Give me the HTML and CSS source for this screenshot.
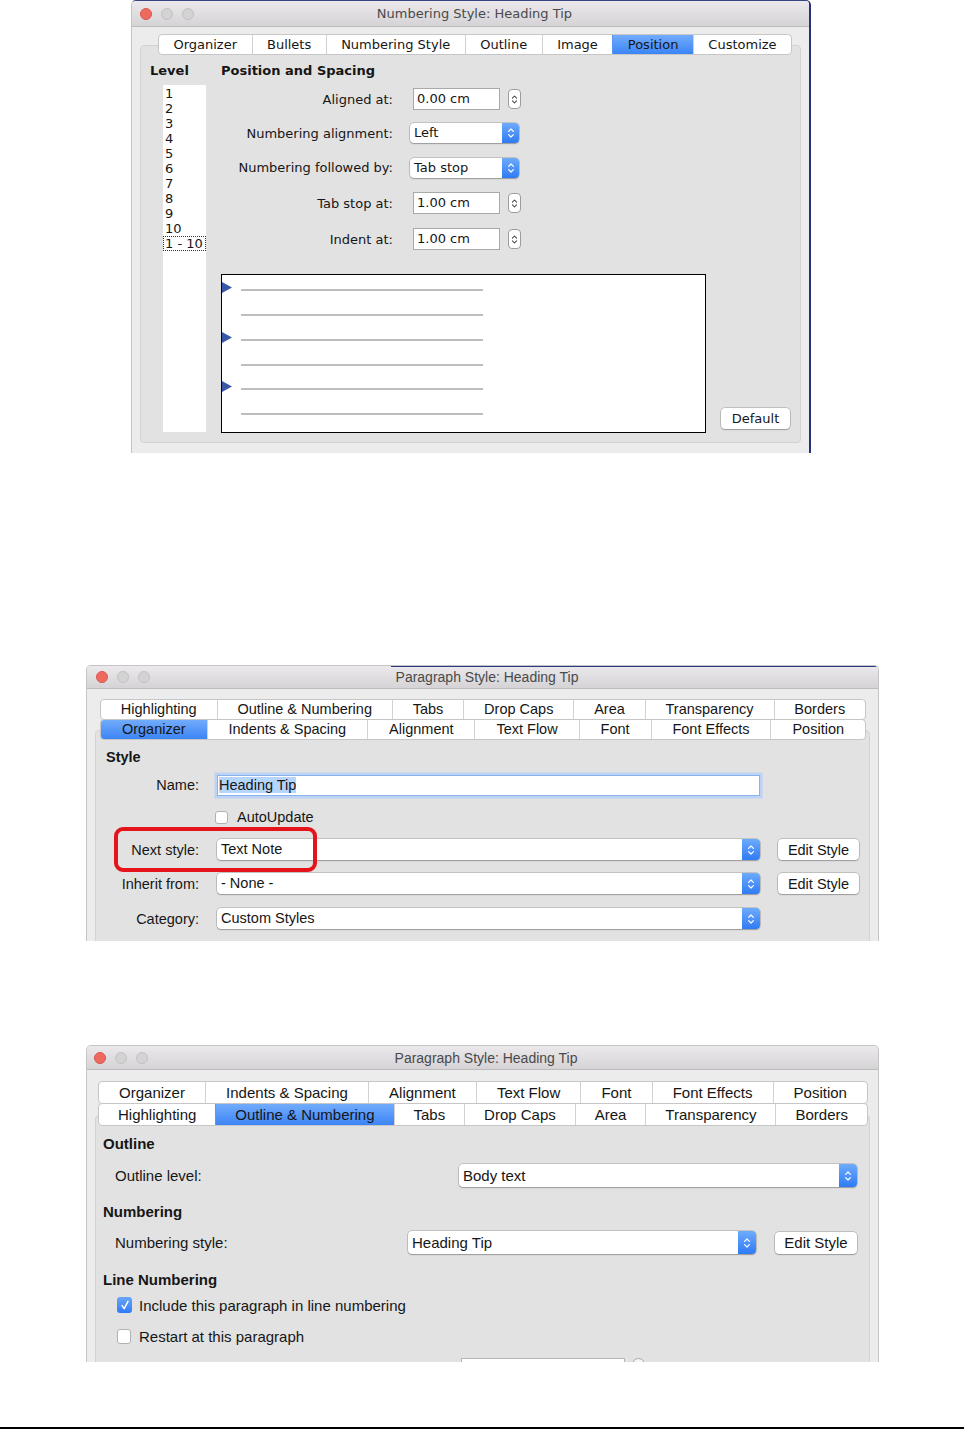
FILE: index.html
```html
<!DOCTYPE html>
<html lang="en">
<head>
    <meta charset="UTF-8">
    <meta name="viewport" content="width=device-width, initial-scale=1.0">
    <title>Numbering and Paragraph Style dialogs</title>
    <link rel="stylesheet" href="styles.css">
</head>
<body>
    <svg class="defs" width="0" height="0" aria-hidden="true">
        <symbol id="updown" viewBox="0 0 8 14"><path d="M1.6 5.4 4 3 6.4 5.4M1.6 8.6 4 11 6.4 8.6" fill="none" stroke="currentColor" stroke-width="1.2" stroke-linecap="round" stroke-linejoin="round"/></symbol>
        <symbol id="tick" viewBox="0 0 14 14"><path d="M4 7.6 6.2 10.6 10 3.4" fill="none" stroke="#fff" stroke-width="1.5" stroke-linecap="round" stroke-linejoin="round"/></symbol>
    </svg>

    <!-- Numbering Style dialog -->
    <div class="window numbering">
        <div class="titlebar">
            <div class="lights"><span class="light close"></span><span class="light"></span><span class="light"></span></div>
            <div class="title">Numbering Style: Heading Tip</div>
        </div>
        <div class="panel">
            <div class="tabrow np-tabs">
                <span class="tab">Organizer</span>
                <span class="tab">Bullets</span>
                <span class="tab">Numbering Style</span>
                <span class="tab">Outline</span>
                <span class="tab">Image</span>
                <span class="tab active">Position</span>
                <span class="tab">Customize</span>
            </div>
            <div class="np-body">
                <div class="levels">
                    <h2 class="heading">Level</h2>
                    <ul class="level-list">
                        <li>1</li>
                        <li>2</li>
                        <li>3</li>
                        <li>4</li>
                        <li>5</li>
                        <li>6</li>
                        <li>7</li>
                        <li>8</li>
                        <li>9</li>
                        <li>10</li>
                        <li class="selected">1 - 10</li>
                    </ul>
                </div>
                <div class="np-main">
                    <h2 class="heading">Position and Spacing</h2>
                    <div class="np-form">
                        <label>Aligned at:</label>
                        <div class="spin"><span class="spin-field">0.00 cm</span><span class="spin-btn"><svg><use href="#updown"/></svg></span></div>
                        <label>Numbering alignment:</label>
                        <div class="select small"><span class="select-value">Left</span><span class="select-arrow"><svg><use href="#updown"/></svg></span></div>
                        <label>Numbering followed by:</label>
                        <div class="select small"><span class="select-value">Tab stop</span><span class="select-arrow"><svg><use href="#updown"/></svg></span></div>
                        <label>Tab stop at:</label>
                        <div class="spin"><span class="spin-field">1.00 cm</span><span class="spin-btn"><svg><use href="#updown"/></svg></span></div>
                        <label>Indent at:</label>
                        <div class="spin"><span class="spin-field">1.00 cm</span><span class="spin-btn"><svg><use href="#updown"/></svg></span></div>
                    </div>
                    <div class="preview-row">
                        <div class="preview">
                            <svg width="483" height="157" viewBox="0 0 483 157">
                                <g stroke="#bdbdbd" stroke-width="2">
                                    <line x1="19" y1="15" x2="261" y2="15"/>
                                    <line x1="19" y1="40" x2="261" y2="40"/>
                                    <line x1="19" y1="65" x2="261" y2="65"/>
                                    <line x1="19" y1="90" x2="261" y2="90"/>
                                    <line x1="19" y1="114" x2="261" y2="114"/>
                                    <line x1="19" y1="139" x2="261" y2="139"/>
                                </g>
                                <g fill="#3a58a8">
                                    <path d="M0 7 10 12.5 0 18Z"/>
                                    <path d="M0 57 10 62.5 0 68Z"/>
                                    <path d="M0 106 10 111.5 0 117Z"/>
                                </g>
                            </svg>
                        </div>
                        <button class="button">Default</button>
                    </div>
                </div>
            </div>
        </div>
    </div>

    <!-- Paragraph Style dialog, Organizer tab -->
    <div class="window para para-organizer">
        <div class="titlebar">
            <div class="lights"><span class="light close"></span><span class="light"></span><span class="light"></span></div>
            <div class="title">Paragraph Style: Heading Tip</div>
        </div>
        <div class="panel">
            <div class="para-tabs">
                <div class="tabrow">
                    <span class="tab">Highlighting</span>
                    <span class="tab">Outline &amp; Numbering</span>
                    <span class="tab">Tabs</span>
                    <span class="tab">Drop Caps</span>
                    <span class="tab">Area</span>
                    <span class="tab">Transparency</span>
                    <span class="tab">Borders</span>
                </div>
                <div class="tabrow">
                    <span class="tab active">Organizer</span>
                    <span class="tab">Indents &amp; Spacing</span>
                    <span class="tab">Alignment</span>
                    <span class="tab">Text Flow</span>
                    <span class="tab">Font</span>
                    <span class="tab">Font Effects</span>
                    <span class="tab">Position</span>
                </div>
            </div>
            <h2 class="heading">Style</h2>
            <div class="org-form">
                <label class="lbl">Name:</label>
                <div class="field"><span class="sel">Heading Tip</span></div>

                <span class="lbl"></span>
                <div class="check-line"><span class="check"></span>AutoUpdate</div>

                <label class="lbl">Next style:</label>
                <div class="select"><span class="select-value">Text Note</span><span class="select-arrow"><svg><use href="#updown"/></svg></span></div>
                <button class="button">Edit Style</button>

                <label class="lbl">Inherit from:</label>
                <div class="select"><span class="select-value">- None -</span><span class="select-arrow"><svg><use href="#updown"/></svg></span></div>
                <button class="button">Edit Style</button>

                <label class="lbl">Category:</label>
                <div class="select"><span class="select-value">Custom Styles</span><span class="select-arrow"><svg><use href="#updown"/></svg></span></div>

                <div class="callout"></div>
            </div>
        </div>
    </div>

    <!-- Paragraph Style dialog, Outline & Numbering tab -->
    <div class="window para para-outline">
        <div class="titlebar">
            <div class="lights"><span class="light close"></span><span class="light"></span><span class="light"></span></div>
            <div class="title">Paragraph Style: Heading Tip</div>
        </div>
        <div class="panel">
            <div class="para-tabs">
                <div class="tabrow">
                    <span class="tab">Organizer</span>
                    <span class="tab">Indents &amp; Spacing</span>
                    <span class="tab">Alignment</span>
                    <span class="tab">Text Flow</span>
                    <span class="tab">Font</span>
                    <span class="tab">Font Effects</span>
                    <span class="tab">Position</span>
                </div>
                <div class="tabrow">
                    <span class="tab">Highlighting</span>
                    <span class="tab active">Outline &amp; Numbering</span>
                    <span class="tab">Tabs</span>
                    <span class="tab">Drop Caps</span>
                    <span class="tab">Area</span>
                    <span class="tab">Transparency</span>
                    <span class="tab">Borders</span>
                </div>
            </div>

            <h2 class="heading">Outline</h2>
            <div class="row row-outline">
                <label>Outline level:</label>
                <div class="select tall outline-select"><span class="select-value">Body text</span><span class="select-arrow"><svg><use href="#updown"/></svg></span></div>
            </div>

            <h2 class="heading heading-numbering">Numbering</h2>
            <div class="row row-numbering">
                <label>Numbering style:</label>
                <div class="select tall numbering-select"><span class="select-value">Heading Tip</span><span class="select-arrow"><svg><use href="#updown"/></svg></span></div>
                <button class="button">Edit Style</button>
            </div>

            <h2 class="heading heading-lines">Line Numbering</h2>
            <div class="check-row first"><span class="check checked"><svg><use href="#tick"/></svg></span>Include this paragraph in line numbering</div>
            <div class="check-row"><span class="check"></span>Restart at this paragraph</div>
            <div class="cut-row"><span class="cut-field"></span><span class="cut-spin"></span></div>
        </div>
    </div>

    <div class="rule"></div>
</body>
</html>
```

FILE: styles.css
```css
* {
    margin: 0;
    padding: 0;
    box-sizing: border-box;
}

body {
    width: 964px;
    height: 1429px;
    overflow: hidden;
    background: #fff;
    color: #161616;
    font-family: "Liberation Sans", Arial, sans-serif;
    font-size: 14.5px;
}

.defs {
    position: absolute;
    width: 0;
    height: 0;
}

/* window chrome */

.window {
    position: relative;
    background: #ececec;
    border: 1px solid #c4c4c4;
    border-bottom: 0;
    border-radius: 5px 5px 0 0;
    overflow: hidden;
}

.titlebar {
    display: grid;
    grid-template-columns: 1fr auto 1fr;
    align-items: center;
    height: 24px;
    padding-left: 8px;
    background: linear-gradient(#ebe9eb, #d5d3d5);
    border-bottom: 1px solid #bcbcbc;
}

.lights {
    display: flex;
    gap: 9px;
}

.light {
    width: 12px;
    height: 12px;
    border-radius: 50%;
    background: #d3d3d3;
    border: 1px solid #c2c2c2;
}

.light.close {
    background: #ee695e;
    border-color: #d8574c;
}

.title {
    color: #4a4a4a;
    font-size: 14px;
    white-space: nowrap;
}

.panel {
    background: #e2e2e2;
    border: 1px solid #d3d3d3;
    border-radius: 4px;
}

.heading {
    font-size: inherit;
    font-weight: bold;
    line-height: 16px;
}

/* tabs */

.tabrow {
    display: flex;
    height: 21px;
    background: #fff;
    border: 1px solid #c6c6c6;
    border-radius: 4px;
    overflow: hidden;
}

.tab {
    flex: 1 1 auto;
    text-align: center;
    line-height: 19px;
    white-space: nowrap;
    border-left: 1px solid #d2d2d2;
}

.tab:first-child {
    border-left: 0;
}

.tab.active {
    background: linear-gradient(#72abfb, #3c85f6);
    border-left-color: #5b97f4;
}

/* controls */

.select {
    display: flex;
    height: 21px;
    background: #fff;
    border-radius: 4px;
    box-shadow: 0 0 0 0.5px rgba(0, 0, 0, 0.28), 0 1px 1.5px rgba(0, 0, 0, 0.22);
    overflow: hidden;
}

.select-value {
    flex: 1;
    padding-left: 4px;
    line-height: 21px;
    white-space: nowrap;
}

.select-arrow {
    width: 18px;
    display: flex;
    align-items: center;
    justify-content: center;
    color: #fff;
    background: linear-gradient(#6eabfc, #2f7bf4);
}

.select-arrow svg {
    width: 8px;
    height: 14px;
}

.button {
    height: 21px;
    font: inherit;
    color: inherit;
    background: #fff;
    border: 0;
    border-radius: 4px;
    box-shadow: 0 0 0 0.5px rgba(0, 0, 0, 0.3), 0 1px 1.5px rgba(0, 0, 0, 0.2);
}

.check {
    display: inline-flex;
    align-items: center;
    justify-content: center;
    width: 13px;
    height: 13px;
    background: #fff;
    border: 1px solid #b2b2b2;
    border-radius: 3px;
}

.check.checked {
    width: 15px;
    height: 16px;
    border: 0;
    background: linear-gradient(#6aa6fb, #2f7bf4);
}

.check.checked svg {
    width: 14px;
    height: 14px;
}

/* numbering style dialog */

.numbering {
    width: 680px;
    height: 453px;
    margin-left: 131px;
    font-family: "DejaVu Sans", sans-serif;
    font-size: 13px;
    border-top: 1px solid #3a4481;
    border-right: 2px solid #27317a;
}

.numbering .titlebar {
    height: 26px;
}

.numbering .title {
    font-size: 13px;
}

.numbering .panel {
    height: 398px;
    margin: 18px 8px 0;
}

.np-tabs {
    width: 634px;
    margin: -12px 0 0 17px;
}

.np-body {
    display: flex;
    margin-top: 8px;
    padding-left: 9px;
}

.levels {
    width: 71px;
}

.level-list {
    list-style: none;
    width: 43px;
    height: 347px;
    margin: 6px 0 0 13px;
    padding-top: 1px;
    background: #fff;
    line-height: 15px;
}

.level-list li {
    padding-left: 2px;
}

.level-list li.selected {
    outline: 1px dotted #333;
    outline-offset: -1px;
}

.np-main {
    flex: 1;
}

.np-form {
    display: grid;
    grid-template-columns: 172px auto;
    grid-template-rows: 34px 34px 35px 36px 36px;
    column-gap: 17px;
    align-items: center;
    margin-top: 3px;
}

.np-form label {
    text-align: right;
}

.spin {
    display: flex;
    align-items: center;
    margin-left: 3px;
}

.spin-field {
    width: 87px;
    height: 22px;
    padding-left: 3px;
    line-height: 20px;
    background: #fff;
    border: 1px solid #a9a9a9;
}

.spin-btn {
    display: flex;
    align-items: center;
    justify-content: center;
    width: 13px;
    height: 20px;
    margin-left: 8px;
    color: #444;
    background: #fff;
    border: 1px solid #9c9c9c;
    border-radius: 4px;
}

.spin-btn svg {
    width: 7px;
    height: 13px;
}

.select.small {
    width: 109px;
    height: 20px;
}

.select.small .select-value {
    line-height: 20px;
}

.select.small .select-arrow {
    width: 17px;
}

.preview-row {
    display: flex;
    align-items: flex-end;
    margin-top: 17px;
}

.preview {
    width: 485px;
    height: 159px;
    background: #fff;
    border: 1px solid #000;
}

.preview svg {
    display: block;
}

.preview-row .button {
    width: 69px;
    margin: 0 0 4px 15px;
}

/* paragraph style dialogs */

.para {
    width: 793px;
    margin-left: 86px;
}

.para-organizer {
    height: 276px;
    margin-top: 212px;
}

.para-organizer::before {
    content: "";
    position: absolute;
    top: 0;
    left: 304px;
    right: 0;
    height: 1px;
    background: #2d3a82;
}

.para-organizer .titlebar {
    height: 23px;
    padding-left: 9px;
}

.para .panel {
    margin: 0 8px;
    height: 400px;
}

.para-organizer .panel {
    margin-top: 41px;
    padding-left: 10px;
}

.para-tabs {
    width: 766px;
    margin: -32px 0 0 -6px;
}

.para-tabs .tabrow + .tabrow {
    margin-top: -1px;
}

.para-organizer .heading {
    margin-top: 9px;
}

.org-form {
    position: relative;
    display: grid;
    grid-template-columns: 93px 547px 81px;
    grid-template-rows: 32px 32px 33px 35px 35px;
    column-gap: 16px;
    align-items: center;
    margin-top: 4px;
}

.org-form .lbl {
    grid-column: 1;
    text-align: right;
}

.field {
    height: 21px;
    margin: 0 2px;
    padding-left: 1px;
    line-height: 19px;
    background: #fff;
    border: 1px solid #8cb2ec;
    box-shadow: 0 0 0 2.5px #bcd3f6;
}

.field .sel {
    background: #b5d5fd;
}

.check-line {
    display: flex;
    align-items: center;
    gap: 9px;
}

.org-form .select {
    margin: 0 2px;
}

.org-form .button {
    width: 81px;
}

.callout {
    position: absolute;
    left: 8px;
    top: 58px;
    width: 203px;
    height: 45px;
    border: 4px solid #e5141b;
    border-radius: 9px;
}

.para-outline {
    height: 317px;
    margin-top: 104px;
    font-size: 15px;
}

.para-outline .titlebar {
    padding-left: 7px;
}

.para-outline .title {
    font-size: 14px;
}

.para-outline .panel {
    margin-top: 45px;
    padding: 0 12px 0 7px;
}

.para-outline .para-tabs {
    width: 770px;
    margin: -35px 0 0 -5px;
}

.para-outline .tabrow {
    height: 23px;
}

.para-outline .tab {
    line-height: 21px;
}

.para-outline .heading {
    margin-top: 10px;
}

.para-outline .heading-numbering {
    margin-top: 17px;
}

.para-outline .heading-lines {
    margin-top: 18px;
}

.row {
    display: flex;
    align-items: center;
    padding-left: 12px;
}

.row label {
    flex: 1;
}

.row-outline {
    margin-top: 12px;
}

.row-numbering {
    margin-top: 11px;
}

.select.tall {
    height: 23px;
}

.select.tall .select-value {
    line-height: 23px;
}

.outline-select {
    width: 398px;
}

.numbering-select {
    width: 348px;
}

.row-numbering .button {
    width: 82px;
    height: 22px;
    margin-left: 19px;
}

.check-row {
    display: flex;
    align-items: center;
    gap: 7px;
    height: 16px;
    margin-top: 15px;
    padding-left: 14px;
}

.check-row.first {
    margin-top: 9px;
}

.check-row .check:not(.checked) {
    width: 14px;
    height: 15px;
    margin-right: 1px;
}

.cut-row {
    display: flex;
    gap: 7px;
    margin-top: 14px;
    padding-left: 358px;
}

.cut-field {
    width: 164px;
    height: 22px;
    background: #fff;
    border: 1px solid #b8b8b8;
}

.cut-spin {
    width: 13px;
    height: 13px;
    border: 1px solid #a8a8a8;
    border-radius: 50%;
    background: #f6f6f6;
}

.rule {
    height: 2px;
    margin-top: 65px;
    background: #000;
}
```
